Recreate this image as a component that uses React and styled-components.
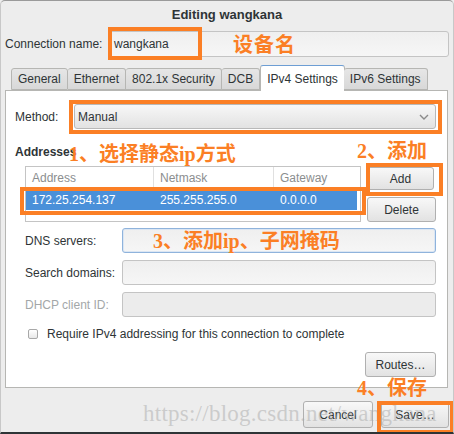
import styled, { createGlobalStyle } from 'styled-components';

const Global = createGlobalStyle`
  html, body {
    margin: 0;
    padding: 0;
    background: #ededed;
  }
  body {
    font-family: "Liberation Sans", Arial, sans-serif;
  }
`;

const ORANGE = '#fb7f25';

const Window = styled.div`
  position: relative;
  width: 454px;
  height: 434px;
  box-sizing: border-box;
  background: #ededed;
  border-top: 1px solid #9a9a9a;
  border-left: 1px solid #c8c8c8;
  border-right: 1px solid #c8c8c8;
  border-bottom: 2px solid #2e3436;
  border-radius: 5px 5px 0 0;
  overflow: hidden;
  font-size: 12px;
  color: #2e3436;
  white-space: nowrap;
`;

const TitleBar = styled.div`
  height: 27px;
  display: flex;
  align-items: center;
  justify-content: center;
  font-weight: bold;
  font-size: 13px;
`;

const Row = styled.div`
  display: flex;
  align-items: center;
`;

const NameRow = styled(Row)`
  margin-top: 3px;
  padding: 0 4px 0 4px;
`;

const Label = styled.div`
  width: ${(p) => p.$w}px;
  flex: none;
  color: ${(p) => (p.$disabled ? '#a3a7a8' : '#2e3436')};
  font-weight: ${(p) => (p.$bold ? 'bold' : 'normal')};
`;

const Entry = styled.div`
  flex: 1;
  height: 26px;
  box-sizing: border-box;
  border: 1px solid ${(p) => (p.$focus ? '#8fb3dc' : '#c4c4c4')};
  border-radius: 3px;
  background: ${(p) => (p.$disabled ? '#ececec' : 'linear-gradient(#efefef, #f6f6f6)')};
  box-shadow: ${(p) => (p.$focus ? 'inset 0 0 0 1px #dbe6f3' : 'none')};
  display: flex;
  align-items: center;
  padding-left: 5px;
`;

const Notebook = styled.div`
  margin: 8px 5px 0 4px;
`;

const Tabs = styled.div`
  display: flex;
  align-items: flex-end;
  height: 25px;
  padding-left: 6px;
  position: relative;
  z-index: 1;
`;

const Tab = styled.div`
  height: ${(p) => (p.$active ? 26 : 22)}px;
  box-sizing: border-box;
  padding: 0 ${(p) => (p.$active ? 6 : 6)}px;
  display: flex;
  align-items: center;
  border: 1px solid #b6b6b3;
  border-left-width: ${(p) => (p.$first || p.$active ? 1 : 0)}px;
  border-bottom: ${(p) => (p.$active ? 'none' : '1px solid #b6b6b3')};
  border-top: 1px solid ${(p) => (p.$active ? '#6d9ed4' : '#b6b6b3')};
  border-radius: 3px 3px 0 0;
  background: ${(p) => (p.$active ? '#ffffff' : 'linear-gradient(#e6e6e6, #d8d8d8)')};
  margin-bottom: ${(p) => (p.$active ? -1 : 0)}px;
  margin-right: ${(p) => (p.$active ? -1 : 0)}px;
  color: #2e3436;
`;

const Page = styled.div`
  height: 298px;
  box-sizing: border-box;
  background: #ffffff;
  border: 1px solid #b6b6b3;
  padding: 13px 11px 0 9px;
  display: flex;
  flex-direction: column;
`;

const Combo = styled.div`
  flex: 1;
  height: 25px;
  box-sizing: border-box;
  border: 1px solid #b8b8b8;
  border-radius: 3px;
  background: linear-gradient(#f7f7f7, #e2e2e2);
  display: flex;
  align-items: center;
  justify-content: space-between;
  padding: 0 6px 0 3px;
`;

const Section = styled.div`
  margin-top: 16px;
  height: 14px;
  line-height: 14px;
  font-weight: bold;
`;

const AddrArea = styled.div`
  margin: 7px 0 0 10px;
  display: flex;
  gap: 6px;
`;

const Tree = styled.div`
  width: 340px;
  height: 56px;
  box-sizing: border-box;
  border: 1px solid #c4c4c4;
  background: #ffffff;
`;

const TreeRow = styled.div`
  display: grid;
  grid-template-columns: 128px 120px 1fr;
  height: 21px;
  align-items: center;
  margin: ${(p) => (p.$head ? '0' : '1px 3px 0 0')};
  background: ${(p) => (p.$sel ? '#4a90d9' : 'transparent')};
  color: ${(p) => (p.$sel ? '#ffffff' : '#8b8e8f')};
`;

const Cell = styled.div`
  padding-left: 6px;
  height: 100%;
  display: flex;
  align-items: center;
  border-right: ${(p) => (p.$sep ? '1px solid #e0e0e0' : 'none')};
`;

const SideButtons = styled.div`
  display: flex;
  flex-direction: column;
  gap: 7px;
  padding-top: 1px;
`;

const Button = styled.div`
  width: ${(p) => p.$w}px;
  height: ${(p) => p.$h || 25}px;
  flex: none;
  box-sizing: border-box;
  border: 1px solid #b0b0b0;
  border-radius: 3px;
  background: linear-gradient(#f8f8f8, #e2e2e2);
  display: flex;
  align-items: center;
  justify-content: center;
  color: #2e3436;
`;

const Fields = styled.div`
  margin: 6px 0 0 10px;
  display: flex;
  flex-direction: column;
  gap: 7px;
`;

const FieldRow = styled(Row)`
  height: 25px;
  & > ${Entry} {
    height: 25px;
  }
`;

const CheckRow = styled(Row)`
  margin: 10px 0 0 13px;
  height: 14px;
  gap: 9px;
`;

const Check = styled.div`
  width: 8px;
  height: 8px;
  border: 1px solid #a8a8a8;
  border-radius: 2px;
  background: linear-gradient(#ffffff, #e8e8e8);
`;

const RoutesRow = styled(Row)`
  justify-content: flex-end;
  margin-top: 11px;
`;

const Footer = styled(Row)`
  justify-content: flex-end;
  gap: 8px;
  margin-top: 13px;
  padding-right: 4px;
`;

/* annotation layer drawn over the dialog */
const Mark = styled.div`
  position: absolute;
  left: ${(p) => p.$x}px;
  top: ${(p) => p.$y}px;
  width: ${(p) => p.$w}px;
  height: ${(p) => p.$h}px;
  box-sizing: border-box;
  border: 4px solid ${ORANGE};
  pointer-events: none;
`;

const Note = styled.div`
  position: absolute;
  left: ${(p) => p.$x}px;
  top: ${(p) => p.$y}px;
  color: ${ORANGE};
  font-family: "Liberation Serif", "Noto Sans CJK SC", serif;
  font-size: 20px;
  font-weight: bold;
  line-height: 22px;
  white-space: nowrap;
  letter-spacing: ${(p) => p.$ls || 0}px;
`;

const Watermark = styled.div`
  position: absolute;
  left: 142px;
  top: 400px;
  font-family: "Liberation Serif", serif;
  font-size: 23px;
  line-height: 26px;
  letter-spacing: 0.25px;
  color: rgba(170, 170, 170, 0.5);
  white-space: nowrap;
  pointer-events: none;
`;

const Chevron = () => (
  <svg width="10" height="6" viewBox="0 0 10 6">
    <path d="M1 1 L5 5 L9 1" fill="none" stroke="#8a8a8a" strokeWidth="1.4" />
  </svg>
);

const tabs = ['General', 'Ethernet', '802.1x Security', 'DCB', 'IPv4 Settings', 'IPv6 Settings'];

const App = () => (
  <Window>
    <Global />
    <TitleBar>Editing wangkana</TitleBar>
    <NameRow>
      <Label $w={103}>Connection name:</Label>
      <Entry>wangkana</Entry>
    </NameRow>

    <Notebook>
      <Tabs>
        {tabs.map((t, i) => (
          <Tab key={t} $first={i === 0} $active={t === 'IPv4 Settings'}>
            {t}
          </Tab>
        ))}
      </Tabs>
      <Page>
        <Row>
          <Label $w={59}>Method:</Label>
          <Combo>
            Manual
            <Chevron />
          </Combo>
        </Row>

        <Section>Addresses</Section>
        <AddrArea>
          <Tree>
            <TreeRow $head>
              <Cell $sep>Address</Cell>
              <Cell $sep>Netmask</Cell>
              <Cell>Gateway</Cell>
            </TreeRow>
            <TreeRow $sel>
              <Cell>172.25.254.137</Cell>
              <Cell>255.255.255.0</Cell>
              <Cell>0.0.0.0</Cell>
            </TreeRow>
          </Tree>
          <SideButtons>
            <Button $w={67} $h={23}>Add</Button>
            <Button $w={69}>Delete</Button>
          </SideButtons>
        </AddrArea>

        <Fields>
          <FieldRow>
            <Label $w={97}>DNS servers:</Label>
            <Entry $focus />
          </FieldRow>
          <FieldRow>
            <Label $w={97}>Search domains:</Label>
            <Entry />
          </FieldRow>
          <FieldRow>
            <Label $w={97} $disabled>DHCP client ID:</Label>
            <Entry $disabled />
          </FieldRow>
        </Fields>

        <CheckRow>
          <Check />
          Require IPv4 addressing for this connection to complete
        </CheckRow>

        <RoutesRow>
          <Button $w={71}>Routes…</Button>
        </RoutesRow>
      </Page>
    </Notebook>

    <Footer>
      <Button $w={70} $h={27}>Cancel</Button>
      <Button $w={68} $h={27}>Save…</Button>
    </Footer>

    <Watermark>https://blog.csdn.net/wangkana</Watermark>

    <Mark $x={107} $y={26} $w={94} $h={33} />
    <Mark $x={68} $y={99} $w={373} $h={34} />
    <Mark $x={365} $y={162} $w={77} $h={33} />
    <Mark $x={19} $y={186} $w={346} $h={28} />
    <Mark $x={376} $y={400} $w={77} $h={33} />

    <Note $x={232} $y={33} $ls={1}>设备名</Note>
    <Note $x={68} $y={142}>1、选择静态ip方式</Note>
    <Note $x={356} $y={139}>2、添加</Note>
    <Note $x={152} $y={229}>3、添加ip、子网掩码</Note>
    <Note $x={356} $y={376}>4、保存</Note>
  </Window>
);

export default App;
